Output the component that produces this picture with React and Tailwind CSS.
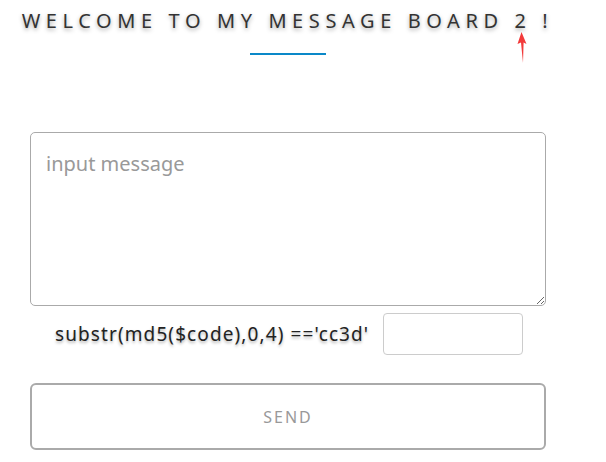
import React from "react";

const App = () => {
  return (
    <div className="relative w-[606px] h-[462px] bg-white overflow-hidden" style={{ fontFamily: '"Noto Sans", "Open Sans", sans-serif' }}>
      <div className="w-[575px] flex flex-col items-center pt-[6px]">
        <h1 className="text-[20px] leading-[30px] tracking-[5.6px] text-[#333] whitespace-nowrap [text-shadow:0_2px_4px_rgba(0,0,0,0.35)]">
          WELCOME TO MY MESSAGE BOARD 2 !
        </h1>
        <div className="mt-[17px] w-[76px] h-[2px] bg-[#0a88c8]" />
      </div>

      {/* annotation arrow */}
      <svg className="absolute left-[512px] top-[31px]" width="20" height="34" viewBox="0 0 20 34">
        <path d="M9.5 1 L5.5 13 L9 11.5 L11 32 L11.6 11.5 L14.5 13 Z" fill="#f23a3a" />
      </svg>

      <div className="mx-[30px] mt-[77px] flex flex-col">
        <textarea
          placeholder="input message"
          className="h-[174px] w-[516px] rounded-[5px] border border-[#aaa] px-[15px] py-[16px] text-[20px] leading-[30px] text-[#333] placeholder:text-[#999] outline-none"
        />
        <div className="mt-[7px] flex items-center pl-[25px]">
          <span className="text-[19px] tracking-[1.1px] text-[#222] [text-shadow:0_2px_3px_rgba(0,0,0,0.3)]">
            substr(md5($code),0,4) =='cc3d'
          </span>
          <input className="ml-[14px] h-[42px] w-[140px] rounded-[4px] border border-[#ccc] outline-none" />
        </div>
        <button className="mt-[28px] h-[67px] w-[516px] rounded-[6px] border-2 border-[#aaa] bg-white text-[16px] tracking-[2px] text-[#999]">
          SEND
        </button>
      </div>
    </div>
  );
};

export default App;
